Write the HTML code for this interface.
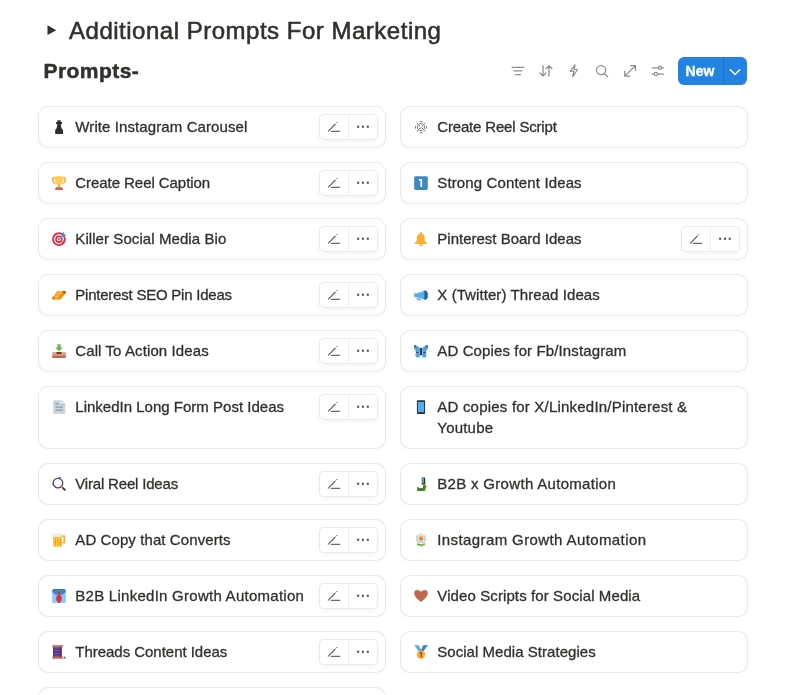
<!DOCTYPE html>
<html><head><meta charset="utf-8">
<style>
*{box-sizing:border-box;margin:0;padding:0}
html,body{width:787px;height:695px;overflow:hidden;background:#fff}
body{position:relative;font-family:"Liberation Sans",sans-serif;color:#32302c;will-change:transform}
.abs{position:absolute}
#tri{left:47px;top:25px;width:0;height:0;border-left:9px solid #32302c;border-top:5px solid transparent;border-bottom:5px solid transparent}
#title{left:69px;top:18.5px;font-size:24px;line-height:24px;letter-spacing:0.51px;white-space:nowrap;-webkit-text-stroke:0.55px #32302c}
#vname{left:43.5px;top:60.3px;font-size:21px;line-height:21px;font-weight:700;letter-spacing:0.45px;white-space:nowrap;-webkit-text-stroke:0.5px #32302c}
.tb{position:absolute;top:59px;width:24px;height:24px}
#new{left:678px;top:57px;width:69px;height:28px;background:#2383e2;border-radius:6px}
#new .t{position:absolute;left:7.6px;top:6px;color:#fff;font-weight:700;font-size:14px;line-height:16px;letter-spacing:0px;-webkit-text-stroke:0.35px #fff}
#new .d{position:absolute;left:45px;top:0;width:1px;height:28px;background:rgba(0,0,0,0.13)}
.card{position:absolute;width:348px;height:42px;border:1px solid rgba(55,50,40,0.105);border-radius:10px;background:#fff;box-shadow:0 2px 4px rgba(15,15,15,0.02)}
.card.tall{height:63px}
.card .txt{position:absolute;left:36.3px;top:8.6px;font-size:15px;line-height:21.5px;white-space:nowrap;-webkit-text-stroke:0.3px #32302c}
.card .ic{position:absolute;left:13px;top:12.7px;width:14px;height:14px}
.card .ic svg{display:block;width:14px;height:14px}
.btns{position:absolute;left:280px;top:7.4px;width:58.8px;height:25.4px;border:1px solid rgba(55,53,47,0.1);border-radius:5px;background:#fff;box-shadow:0 2px 4px rgba(15,15,15,0.04)}
.btns .dv{position:absolute;left:28.2px;top:0;width:1px;height:100%;background:rgba(55,53,47,0.09)}
.card svg.bi{position:absolute;left:-1px;top:-1px}
</style></head><body>
<svg class="abs" style="left:40px;top:20px" width="24" height="20" viewBox="40 20 24 20"><path fill="#32302c" d="M47.5 25.3L56.2 30.15L47.5 35z"/></svg>
<div id="title" class="abs">Additional Prompts For Marketing</div>
<div id="vname" class="abs">Prompts-</div>

<!-- toolbar -->
<svg class="abs" style="left:500px;top:55px" width="170" height="32" viewBox="500 55 170 32" fill="none" stroke="#8f8e8b" stroke-width="1.25" stroke-linecap="round" stroke-linejoin="round">
  <path d="M512 67.3H523.9M513.9 70.9H521.9M515.4 74.5H520.6"/>
  <path d="M543 65.7V76M540 73L543 76L546 73M549 76V65.7M546 68.7L549 65.7L552 68.7"/>
  <path d="M575 64.8L570.3 71.1L573.8 71.2L572.8 76.6L577.6 69.5L574.2 69.4Z"/>
  <circle cx="601.1" cy="70.1" r="4.6"/><path d="M604.5 73.5L607.7 76.7"/>
  <path d="M624.7 76.1L635.5 65.6M630.6 65.6H635.5V70.4M624.7 71.2V76.1H629.6"/>
  <path d="M652.2 67.8H658.2M661.6 67.8H663.5M652.2 74H654.2M657.6 74H663.5"/>
  <circle cx="659.9" cy="67.8" r="1.65"/><circle cx="655.9" cy="74" r="1.65"/>
</svg>
<div id="new" class="abs"><div class="t">New</div><div class="d"></div>
<svg class="abs" style="left:0;top:0" width="69" height="28" viewBox="678 57 69 28" fill="none" stroke="#fff" stroke-width="1.5" stroke-linecap="round" stroke-linejoin="round"><path d="M730.3 69.8L735 74.5L739.7 69.8"/></svg>
</div>

<!-- CARDS -->
<div class="card" style="left:38px;top:106px"><div class="ic"><svg viewBox="0 0 36 36"><path fill="#292f33" d="M14.8 0.5h6.4l1.3 1.5v3h3.3v5.6h-2.6v1.4c0 4.5 0.5 8 2 10l3 3.5v10.5H8.2V25.5l3-3.5c1.5-2 2-5.5 2-10v-1.4h-2.6V5h3.3V2z"/><path fill="#8899a6" d="M10.6 11h14.8v0.9H10.6z" opacity=".55"/><path fill="#5b6770" d="M13 3.5h2l-1 2h-2z" opacity=".5"/></svg></div><div class="txt" style="letter-spacing:0.099px">Write Instagram Carousel</div><div class="btns"><div class="dv"></div></div><svg class="bi" width="348" height="42" viewBox="38 106 348 42" fill="none" stroke="#6f6d69" stroke-width="1.35" stroke-linecap="round"><path d="M328.4 131.1L335.1 124.2M331.3 131.3H339.7"/><circle cx="336.8" cy="122.6" r="0.7" fill="#6f6d69" stroke="none"/><g fill="#5f5d59" stroke="none"><circle cx="358.1" cy="126.8" r="1.2"/><circle cx="362.95" cy="126.8" r="1.2"/><circle cx="367.8" cy="126.8" r="1.2"/></g></svg></div>
<div class="card" style="left:38px;top:162px"><div class="ic"><svg viewBox="0 0 36 36"><path fill="#ffac33" d="M0.5 3h8v3.5H4.5v5c0 3 2 5.5 4.5 6.5v3.5C4 20.5 0.5 16 0.5 11.5zM35.5 3h-8v3.5h4v5c0 3-2 5.5-4.5 6.5v3.5c5-1 8.5-5.5 8.5-10z"/><path fill="#ffcc4d" d="M8 0.5h20v12c0 6-3.5 10.5-10 10.5S8 18.5 8 12.5z"/><path fill="#ffac33" d="M15 22h6v7h-6z"/><path fill="#c1694f" d="M11 29h14l3 4v3.5H8V33z"/><path fill="#e07b4f" d="M11 29h14l1 1.5H10z"/></svg></div><div class="txt" style="letter-spacing:-0.058px">Create Reel Caption</div><div class="btns"><div class="dv"></div></div><svg class="bi" width="348" height="42" viewBox="38 106 348 42" fill="none" stroke="#6f6d69" stroke-width="1.35" stroke-linecap="round"><path d="M328.4 131.1L335.1 124.2M331.3 131.3H339.7"/><circle cx="336.8" cy="122.6" r="0.7" fill="#6f6d69" stroke="none"/><g fill="#5f5d59" stroke="none"><circle cx="358.1" cy="126.8" r="1.2"/><circle cx="362.95" cy="126.8" r="1.2"/><circle cx="367.8" cy="126.8" r="1.2"/></g></svg></div>
<div class="card" style="left:38px;top:218px"><div class="ic"><svg viewBox="0 0 36 36"><circle cx="17.8" cy="18.4" r="17.6" fill="#dd2e44"/><circle cx="17.8" cy="18.4" r="12.8" fill="#fff"/><circle cx="17.8" cy="18.4" r="9.6" fill="#dd2e44"/><circle cx="17.8" cy="18.4" r="5" fill="#fff"/><circle cx="17.8" cy="18.4" r="2.6" fill="#dd2e44"/><path stroke="#55acee" stroke-width="2.6" d="M17.5 18.8L28 8.5"/><path fill="#3b94d9" d="M24.5 3.5l5-3.5 1.5 5 5 1.5-3.5 5h-8z"/><path fill="#a0041e" d="M24 28a12 12 0 0 0 6-6l1.8 2a14 14 0 0 1-6 6z" opacity=".6"/></svg></div><div class="txt" style="letter-spacing:0.079px">Killer Social Media Bio</div><div class="btns"><div class="dv"></div></div><svg class="bi" width="348" height="42" viewBox="38 106 348 42" fill="none" stroke="#6f6d69" stroke-width="1.35" stroke-linecap="round"><path d="M328.4 131.1L335.1 124.2M331.3 131.3H339.7"/><circle cx="336.8" cy="122.6" r="0.7" fill="#6f6d69" stroke="none"/><g fill="#5f5d59" stroke="none"><circle cx="358.1" cy="126.8" r="1.2"/><circle cx="362.95" cy="126.8" r="1.2"/><circle cx="367.8" cy="126.8" r="1.2"/></g></svg></div>
<div class="card" style="left:38px;top:274px"><div class="ic"><svg viewBox="0 0 36 36"><path fill="#f4900c" d="M0.5 25.4L6 19l7.3-11.1h20.4L36 11.5 22.3 29.4l-6 .3H2.5z"/><path fill="#ffac33" d="M12 10h15l-6 8H8z"/><path fill="#ffcc4d" d="M9 19h10l-4 6H6zM16 8h12l-2 2H14z" opacity=".9"/><path fill="#e05200" d="M0.5 25.4L4 22h4l-3 6.7H2.5zM26 7.9h7.7L36 11.5l-3 4-4-1z"/><path fill="#ffe8b6" d="M26 12h2.5l-1 2h-2.5zM5 22.5h2.5l-1 2H4z"/></svg></div><div class="txt" style="letter-spacing:-0.227px">Pinterest SEO Pin Ideas</div><div class="btns"><div class="dv"></div></div><svg class="bi" width="348" height="42" viewBox="38 106 348 42" fill="none" stroke="#6f6d69" stroke-width="1.35" stroke-linecap="round"><path d="M328.4 131.1L335.1 124.2M331.3 131.3H339.7"/><circle cx="336.8" cy="122.6" r="0.7" fill="#6f6d69" stroke="none"/><g fill="#5f5d59" stroke="none"><circle cx="358.1" cy="126.8" r="1.2"/><circle cx="362.95" cy="126.8" r="1.2"/><circle cx="367.8" cy="126.8" r="1.2"/></g></svg></div>
<div class="card" style="left:38px;top:330px"><div class="ic"><svg viewBox="0 0 36 36"><path fill="#77b255" d="M13.5 0.5h9v8.5h5.5l-10 10-10-10h5.5z"/><path fill="#d99e82" d="M0.5 21h35v14H0.5z"/><path fill="#c1694f" d="M0.5 30.5h35v3l-2 2.5H3l-2.5-2.5z"/><path fill="#662113" d="M10.5 21h15l-2.5 4.5H13z"/></svg></div><div class="txt" style="letter-spacing:0.098px">Call To Action Ideas</div><div class="btns"><div class="dv"></div></div><svg class="bi" width="348" height="42" viewBox="38 106 348 42" fill="none" stroke="#6f6d69" stroke-width="1.35" stroke-linecap="round"><path d="M328.4 131.1L335.1 124.2M331.3 131.3H339.7"/><circle cx="336.8" cy="122.6" r="0.7" fill="#6f6d69" stroke="none"/><g fill="#5f5d59" stroke="none"><circle cx="358.1" cy="126.8" r="1.2"/><circle cx="362.95" cy="126.8" r="1.2"/><circle cx="367.8" cy="126.8" r="1.2"/></g></svg></div>
<div class="card tall" style="left:38px;top:386px"><div class="ic"><svg viewBox="0 0 36 36"><path fill="#ccd6dd" d="M3 0.5h21.5l9.5 9.5v26H3z"/><path fill="#e1e8ed" d="M22.5 0.5l11 11h-11z"/><path fill="#99aab5" d="M8.5 8h8.5v4.5H8.5zM22 10.5h11.5V12H22zM8.5 16h19.5v4.5H8.5zM8.5 24h19.5v4.5H8.5z"/></svg></div><div class="txt" style="letter-spacing:0.009px">LinkedIn Long Form Post Ideas</div><div class="btns"><div class="dv"></div></div><svg class="bi" width="348" height="42" viewBox="38 106 348 42" fill="none" stroke="#6f6d69" stroke-width="1.35" stroke-linecap="round"><path d="M328.4 131.1L335.1 124.2M331.3 131.3H339.7"/><circle cx="336.8" cy="122.6" r="0.7" fill="#6f6d69" stroke="none"/><g fill="#5f5d59" stroke="none"><circle cx="358.1" cy="126.8" r="1.2"/><circle cx="362.95" cy="126.8" r="1.2"/><circle cx="367.8" cy="126.8" r="1.2"/></g></svg></div>
<div class="card" style="left:38px;top:463px"><div class="ic"><svg viewBox="0 0 36 36"><circle cx="15.3" cy="15.6" r="12.3" fill="none" stroke="#553788" stroke-width="3.2"/><path fill="#553788" d="M17 1.5l1.5-1.5 1.5 1.5 1.5-1.5 1.5 1.5-1 2h-5zM0 17l1.5-1.5v6L0 20z"/><circle cx="25.8" cy="26" r="3" fill="#f4900c"/><path stroke="#292f33" stroke-width="4.8" stroke-linecap="round" d="M28.5 28.8l4.5 4.5"/></svg></div><div class="txt" style="letter-spacing:-0.185px">Viral Reel Ideas</div><div class="btns"><div class="dv"></div></div><svg class="bi" width="348" height="42" viewBox="38 106 348 42" fill="none" stroke="#6f6d69" stroke-width="1.35" stroke-linecap="round"><path d="M328.4 131.1L335.1 124.2M331.3 131.3H339.7"/><circle cx="336.8" cy="122.6" r="0.7" fill="#6f6d69" stroke="none"/><g fill="#5f5d59" stroke="none"><circle cx="358.1" cy="126.8" r="1.2"/><circle cx="362.95" cy="126.8" r="1.2"/><circle cx="367.8" cy="126.8" r="1.2"/></g></svg></div>
<div class="card" style="left:38px;top:519px"><div class="ic"><svg viewBox="0 0 36 36"><path fill="#ffac33" d="M25 6h6.5a2.5 2.5 0 0 1 2.5 2.5v16a2.5 2.5 0 0 1-2.5 2.5H25v-4h4.5V10H25z"/><path fill="#ffcc4d" d="M2.5 10h23v26H5l-2.5-2z"/><path fill="#f4900c" d="M7.5 14h2.5v18H7.5zM14 14h2.5v18H14zM20.5 14h2.5v18h-2.5z"/><path fill="#e1e8ed" d="M1 0.5h24V10H1z" opacity=".75"/><path fill="#ffac33" d="M2.5 10h23v1.5h-23z"/></svg></div><div class="txt" style="letter-spacing:0.09px">AD Copy that Converts</div><div class="btns"><div class="dv"></div></div><svg class="bi" width="348" height="42" viewBox="38 106 348 42" fill="none" stroke="#6f6d69" stroke-width="1.35" stroke-linecap="round"><path d="M328.4 131.1L335.1 124.2M331.3 131.3H339.7"/><circle cx="336.8" cy="122.6" r="0.7" fill="#6f6d69" stroke="none"/><g fill="#5f5d59" stroke="none"><circle cx="358.1" cy="126.8" r="1.2"/><circle cx="362.95" cy="126.8" r="1.2"/><circle cx="367.8" cy="126.8" r="1.2"/></g></svg></div>
<div class="card" style="left:38px;top:575px"><div class="ic"><svg viewBox="0 0 36 36"><path fill="#88c9f9" d="M0.5 3.5h35v29l-3 3.5H3l-2.5-3z"/><path fill="#3b88c3" d="M3 0.5h30l2.5 3v4L27 15h-18L0.5 7.5v-4z"/><path fill="#226699" d="M4 0.5h28v2H4z"/><path fill="#dd2e44" d="M15 6h6l1 3-2 2v4l5 5v8l-5 8h-4l-5-8v-8l5-5v-4l-2-2z"/></svg></div><div class="txt" style="letter-spacing:0.262px">B2B LinkedIn Growth Automation</div><div class="btns"><div class="dv"></div></div><svg class="bi" width="348" height="42" viewBox="38 106 348 42" fill="none" stroke="#6f6d69" stroke-width="1.35" stroke-linecap="round"><path d="M328.4 131.1L335.1 124.2M331.3 131.3H339.7"/><circle cx="336.8" cy="122.6" r="0.7" fill="#6f6d69" stroke="none"/><g fill="#5f5d59" stroke="none"><circle cx="358.1" cy="126.8" r="1.2"/><circle cx="362.95" cy="126.8" r="1.2"/><circle cx="367.8" cy="126.8" r="1.2"/></g></svg></div>
<div class="card" style="left:38px;top:631px"><div class="ic"><svg viewBox="0 0 36 36"><path fill="#553788" d="M2.5 5h23v26h-23z"/><path fill="#9266cc" d="M7 6.5h11v2H7zM7 13h11v2H7zM7 20.5h11v2H7zM7 27.5h11v2H7z"/><path fill="#d2663f" d="M0.5 0.5h28v3l-2.5 2H3L0.5 3.5zM0.5 35.5h28v-3l-2.5-2H3l-2.5 2z"/><path stroke="#553788" stroke-width="3" stroke-linecap="round" d="M30.5 31l3 2.5"/><path stroke="#ccd6dd" stroke-width="1.5" d="M25.5 28l5 3"/></svg></div><div class="txt" style="letter-spacing:-0.03px">Threads Content Ideas</div><div class="btns"><div class="dv"></div></div><svg class="bi" width="348" height="42" viewBox="38 106 348 42" fill="none" stroke="#6f6d69" stroke-width="1.35" stroke-linecap="round"><path d="M328.4 131.1L335.1 124.2M331.3 131.3H339.7"/><circle cx="336.8" cy="122.6" r="0.7" fill="#6f6d69" stroke="none"/><g fill="#5f5d59" stroke="none"><circle cx="358.1" cy="126.8" r="1.2"/><circle cx="362.95" cy="126.8" r="1.2"/><circle cx="367.8" cy="126.8" r="1.2"/></g></svg></div>
<div class="card" style="left:400px;top:106px"><div class="ic"><svg viewBox="0 0 36 36"><g fill="none" stroke="#5b6770" stroke-width="2.1"><path d="M14.5 4.2h7M13.5 9.6h9M14.5 32.8h7M13.5 27.4h9M4 14.8v7.4M9.2 14v9M32 14.8v7.4M26.8 14v9"/></g><path fill="#5b6770" d="M7.2 8.2h2.6v2.6h-2.6zM26.2 8.2h2.6v2.6h-2.6zM7.2 26.2h2.6v2.6h-2.6zM26.2 26.2h2.6v2.6h-2.6zM10.0 10.9h2.6v2.6h-2.6zM23.4 10.9h2.6v2.6h-2.6zM10.0 23.5h2.6v2.6h-2.6zM23.4 23.5h2.6v2.6h-2.6zM12.8 13.6h2.6v2.6h-2.6zM20.6 13.6h2.6v2.6h-2.6zM12.8 20.8h2.6v2.6h-2.6zM20.6 20.8h2.6v2.6h-2.6z"/><path fill="#8899a6" opacity=".7" d="M5.0 6.0h2v2h-2zM29.0 6.0h2v2h-2zM5.0 29.0h2v2h-2zM29.0 29.0h2v2h-2z"/><rect x="16.3" y="16.8" width="3.4" height="3.4" fill="#aab8c2"/></svg></div><div class="txt" style="letter-spacing:-0.176px">Create Reel Script</div></div>
<div class="card" style="left:400px;top:162px"><div class="ic"><svg viewBox="0 0 36 36"><path fill="#3b88c3" d="M0.5 3.5L3.5 0.5h29l3 3v29l-3 3.5h-29L0.5 32.5z"/><path fill="#fff" d="M13 8h8v20h-4.5V12h-3.5z"/></svg></div><div class="txt" style="letter-spacing:0.135px">Strong Content Ideas</div></div>
<div class="card" style="left:400px;top:218px"><div class="ic"><svg viewBox="0 0 36 36"><path fill="#ffac33" d="M15.5 0.5h5v5h5v5h2v11l2 3.5 4 4V31h-32v-2l4-4 2-3.5v-11h2v-5h5z"/><path fill="#ffac33" d="M13.5 31.5h9l-1.5 4.5h-6z"/></svg></div><div class="txt" style="letter-spacing:0.0px">Pinterest Board Ideas</div><div class="btns"><div class="dv"></div></div><svg class="bi" width="348" height="42" viewBox="38 106 348 42" fill="none" stroke="#6f6d69" stroke-width="1.35" stroke-linecap="round"><path d="M328.4 131.1L335.1 124.2M331.3 131.3H339.7"/><circle cx="336.8" cy="122.6" r="0.7" fill="#6f6d69" stroke="none"/><g fill="#5f5d59" stroke="none"><circle cx="358.1" cy="126.8" r="1.2"/><circle cx="362.95" cy="126.8" r="1.2"/><circle cx="367.8" cy="126.8" r="1.2"/></g></svg></div>
<div class="card" style="left:400px;top:274px"><div class="ic"><svg viewBox="0 0 36 36"><path fill="#55acee" d="M0.5 15L2 13.5h8.5l1-2.5h9l1-3H26v21h-4.5l-1-2h-9l-1-3H2l-1.5-1.5z"/><path fill="#226699" d="M26 6.5h4.5l3 3 2 4v10l-2 4-3 3H26z"/><path fill="none" stroke="#3b88c3" stroke-width="2.2" d="M8.3 24.5v5.6h9.7"/></svg></div><div class="txt" style="letter-spacing:0.08px">X (Twitter) Thread Ideas</div></div>
<div class="card" style="left:400px;top:330px"><div class="ic"><svg viewBox="0 0 36 36"><path fill="#55acee" d="M1 3.5l5 0.5 6 4 4 5v6l-3 2-7-1-3-3-1-6zM35 3.5l-5 0.5-6 4-4 5v6l3 2 7-1 3-3 1-6zM4 23l5-2 6 1 1 4v4l-3 4.5H7l-2-2-1-4zM32 23l-5-2-6 1-1 4v4l3 4.5h6l2-2 1-4z"/><path fill="#3b88c3" d="M3 5l10 6-7 4zM33 5L23 11l7 4zM7 26l5 1-2 5zM29 26l-5 1 2 5z" opacity=".6"/><path fill="#292f33" d="M1 3.5h4.5L3 8 2 14 1 10zM35 3.5h-4.5L33 8l1 6 1-4zM5 19l9 2-2 1.5-6 .5zM31 19l-9 2 2 1.5 6 .5zM3.5 28.5l1.5 1v2zM32.5 28.5l-1.5 1v2z"/><path fill="#292f33" d="M16.3 9.5h3.4l0.8 3v14l-2.5 3-2.5-3v-14z"/><path fill="#3b88c3" d="M17 14h2v12h-2z" opacity=".5"/><path stroke="#ccd6dd" stroke-width="1.2" d="M13.5 5.5l2.5 3.5M22.5 5.5L20 9"/></svg></div><div class="txt" style="letter-spacing:0.12px">AD Copies for Fb/Instagram</div></div>
<div class="card tall" style="left:400px;top:386px"><div class="ic"><svg viewBox="0 0 36 36"><rect x="7.5" y="0.5" width="21" height="35.5" rx="2.5" fill="#292f33"/><path fill="#55acee" d="M10 5h16v26.5H10z"/></svg></div><div class="txt" style="letter-spacing:0.205px">AD copies for X/LinkedIn/Pinterest &amp;<br>Youtube</div></div>
<div class="card" style="left:400px;top:463px"><div class="ic"><svg viewBox="0 0 36 36"><path fill="#4a8a2a" d="M8 26.5h4l1.5 2h8l1.5-2v-5.5l1.5-1.5h7v7l-2 3v4l-1.5 2.5H8z"/><path fill="#3e721d" d="M10 31h14v3H10z" opacity=".6"/><path fill="#fbd9a8" d="M24 8h7.5l.5 13h-8z"/><rect x="20" y="1" width="8.5" height="18.5" rx="1" fill="#292f33"/><path fill="#88c9f9" d="M21.5 2.8h3.5v13.5h-3.5z"/><path fill="#3b88c3" d="M21.5 2.8h1.4v13.5h-1.4z"/></svg></div><div class="txt" style="letter-spacing:0.309px">B2B x Growth Automation</div></div>
<div class="card" style="left:400px;top:519px"><div class="ic"><svg viewBox="0 0 36 36"><path fill="#77b255" d="M7.5 26.5c2.5-0.5 4 0.5 5 2 1-1 2-1.5 3-1 1 1 1.5 1.5 2.5 1.5s1.5-.5 2.5-1.5c1-.5 2 0 3 1 1-1.5 2.5-2.5 5-2v3.5c-1.5 1.5-3.5 2.5-5 3l-2-1-2 2.5h-3l-2-2.5-2 1c-1.5-.5-3.5-1.5-5-3z"/><path fill="#5c913b" d="M12 29l2 2 2-1M24 29l-2 2-2-1" opacity=".6"/><g fill="#ccd6dd"><ellipse cx="18" cy="5.5" rx="5" ry="5"/><circle cx="10" cy="10" r="5"/><circle cx="26" cy="10" r="5"/><circle cx="8.5" cy="17" r="4.5"/><circle cx="27.5" cy="17" r="4.5"/><circle cx="12.5" cy="21.5" r="5"/><circle cx="23.5" cy="21.5" r="5"/><circle cx="18" cy="21" r="4.5"/></g><g fill="#e1e8ed"><circle cx="18" cy="7" r="2.5"/><circle cx="12" cy="12" r="2.5"/><circle cx="24" cy="12" r="2.5"/><circle cx="13" cy="19" r="2.5"/><circle cx="23" cy="19" r="2.5"/></g><path fill="#f4900c" d="M15.5 9h5l2.5 2.5v5l-2.5 2.5h-5L13 16.5v-5z"/></svg></div><div class="txt" style="letter-spacing:0.394px">Instagram Growth Automation</div></div>
<div class="card" style="left:400px;top:575px"><div class="ic"><svg viewBox="0 0 36 36"><path fill="#c1694f" d="M0.5 10.5C0.5 5.5 3.5 2.5 8.5 2.5c4 0 7.5 2.5 9.5 5 2-2.5 5.5-5 9.5-5 5 0 8 3 8 8C35.5 19.5 26 27.5 18 33.5 10 27.5 0.5 19.5 0.5 10.5z"/></svg></div><div class="txt" style="letter-spacing:0.103px">Video Scripts for Social Media</div></div>
<div class="card" style="left:400px;top:631px"><div class="ic"><svg viewBox="0 0 36 36"><path fill="#55acee" d="M0.5 0.5h11.5l6 11 6-11h11.5L24 16H12z"/><path fill="#3b88c3" d="M24 0.5h11.5L24 16h-6z"/><circle cx="18" cy="24.8" r="10.5" fill="#ffac33"/><path fill="#8a4b38" d="M15 18h5.5v14h-3.5v-10h-3z"/></svg></div><div class="txt" style="letter-spacing:0.034px">Social Media Strategies</div></div>
<div class="card" style="left:38px;top:687px"></div>
</body></html>
